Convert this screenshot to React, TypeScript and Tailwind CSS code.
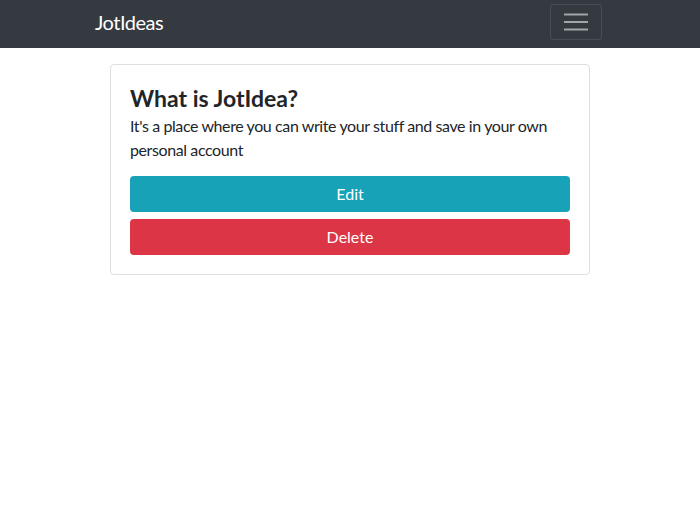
import { useState } from 'react'

const font = { fontFamily: 'Lato, "Noto Sans", sans-serif' }

function MenuIcon() {
  return (
    <svg width="24" height="18" viewBox="0 0 24 18" fill="none">
      <path d="M0 1.5h24M0 9h24M0 16.5h24" stroke="rgba(255,255,255,0.55)" strokeWidth="2" />
    </svg>
  )
}

export default function App() {
  const [open, setOpen] = useState(false)

  return (
    <div className="min-h-screen bg-white text-[#212529]" style={font}>
      <nav className="h-12 bg-[#343a40]">
        <div className="w-[540px] mx-auto px-[15px] h-[43px] flex items-center justify-between">
          <a href="#" className="text-[20px] leading-none tracking-[-0.5px] text-white">JotIdeas</a>
          <button
            onClick={() => setOpen(!open)}
            className="w-[52px] h-[36px] mr-[3px] flex items-center justify-center rounded border border-white/10"
          >
            <MenuIcon />
          </button>
        </div>
      </nav>

      <div className="w-[480px] mx-auto mt-4 rounded border border-black/[0.125] pt-5 pb-[19px] px-[19px]">
        <h3 className="text-[23px] leading-[26px] font-bold mb-[3px]">What is JotIdea?</h3>
        <p className="text-[16px] leading-6 tracking-[-0.4px] mb-[14px]">
          It's a place where you can write your stuff and save in your own personal account
        </p>
        <div className="flex flex-col gap-[7px]">
          <button className="h-9 w-full rounded bg-[#17a2b8] text-white text-[16px]">Edit</button>
          <button className="h-9 w-full rounded bg-[#dc3545] text-white text-[16px]">Delete</button>
        </div>
      </div>
    </div>
  )
}
